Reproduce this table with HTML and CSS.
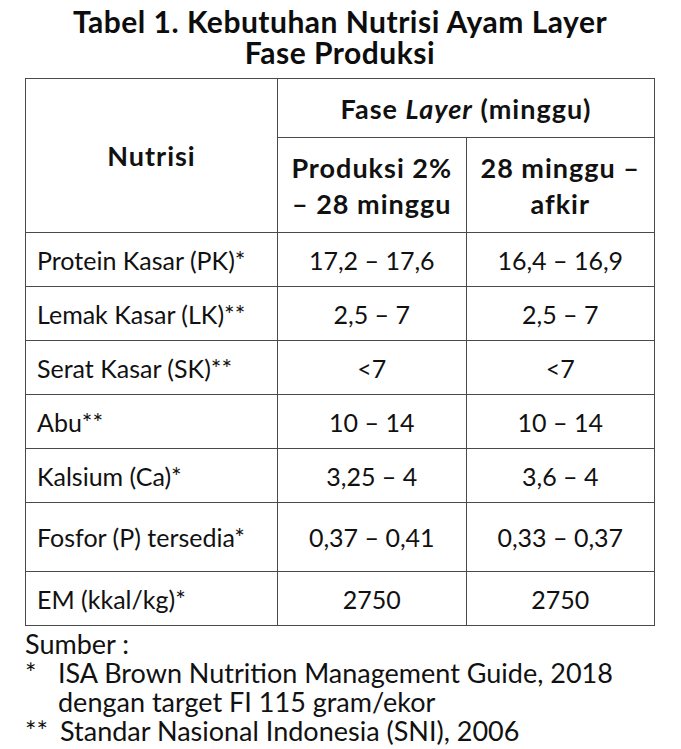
FILE: index.html
```html
<!DOCTYPE html>
<html>
<head>
<meta charset="utf-8">
<link rel="stylesheet" href="styles.css">
</head>
<body>
<div class="page">
  <h1 class="title">Tabel 1. Kebutuhan Nutrisi Ayam Layer<br>Fase Produksi</h1>
  <table class="nutri">
    <tr class="h1row">
      <th rowspan="2" class="c-name">Nutrisi</th>
      <th colspan="2">Fase <i>Layer</i> (minggu)</th>
    </tr>
    <tr class="h2row">
      <th class="c-val">Produksi 2%<br>– 28 minggu</th>
      <th class="c-val">28 minggu –<br>afkir</th>
    </tr>
    <tr class="r"><td class="name">Protein Kasar (PK)*</td><td>17,2 – 17,6</td><td>16,4 – 16,9</td></tr>
    <tr class="r"><td class="name">Lemak Kasar (LK)**</td><td>2,5 – 7</td><td>2,5 – 7</td></tr>
    <tr class="r"><td class="name">Serat Kasar (SK)**</td><td>&lt;7</td><td>&lt;7</td></tr>
    <tr class="r"><td class="name">Abu**</td><td>10 – 14</td><td>10 – 14</td></tr>
    <tr class="r"><td class="name">Kalsium (Ca)*</td><td>3,25 – 4</td><td>3,6 – 4</td></tr>
    <tr class="r tall"><td class="name">Fosfor (P) tersedia*</td><td>0,37 – 0,41</td><td>0,33 – 0,37</td></tr>
    <tr class="r"><td class="name">EM (kkal/kg)*</td><td>2750</td><td>2750</td></tr>
  </table>
  <div class="source">
    <div>Sumber :</div>
    <div class="note"><span class="mark">*</span><span>ISA Brown Nutrition Management Guide, 2018<br>dengan target FI 115 gram/ekor</span></div>
    <div class="note"><span class="mark mark2">**</span><span>Standar Nasional Indonesia (SNI), 2006</span></div>
  </div>
</div>
</body>
</html>
```

FILE: styles.css
```css
html, body {
  margin: 0;
  padding: 0;
  background: #ffffff;
}
body {
  font-family: Lato, "Open Sans", sans-serif;
  color: #111111;
}
.page {
  width: 630px;
  padding: 6px 0 0 25px;
}
.title {
  margin: 0;
  font-size: 30px;
  line-height: 31px;
  letter-spacing: 0.5px;
  font-weight: 700;
  text-align: center;
  color: #0d0d0d;
  height: 72px;
}
.nutri {
  width: 630px;
  border-collapse: collapse;
  table-layout: fixed;
  font-size: 25px;
}
.nutri th, .nutri td {
  border: 1px solid #4a4a4a;
  padding: 0;
  text-align: center;
  vertical-align: middle;
}
.nutri th {
  font-weight: 700;
  font-size: 27px;
  letter-spacing: 1px;
}
.nutri .c-name { width: 251px; }
.h1row { height: 59px; }
.h2row { height: 95px; }
.h2row th { line-height: 36px; padding-top: 2px; }
.r { height: 54px; }
.r.tall { height: 69px; }
.nutri td.name {
  text-align: left;
  padding-left: 11px;
}
.source {
  font-size: 27px;
  line-height: 29px;
  padding-top: 3px;
}
.note {
  display: flex;
}
.note .mark {
  width: 33px;
  flex: none;
}
.note .mark2 { width: 35px; }
```
